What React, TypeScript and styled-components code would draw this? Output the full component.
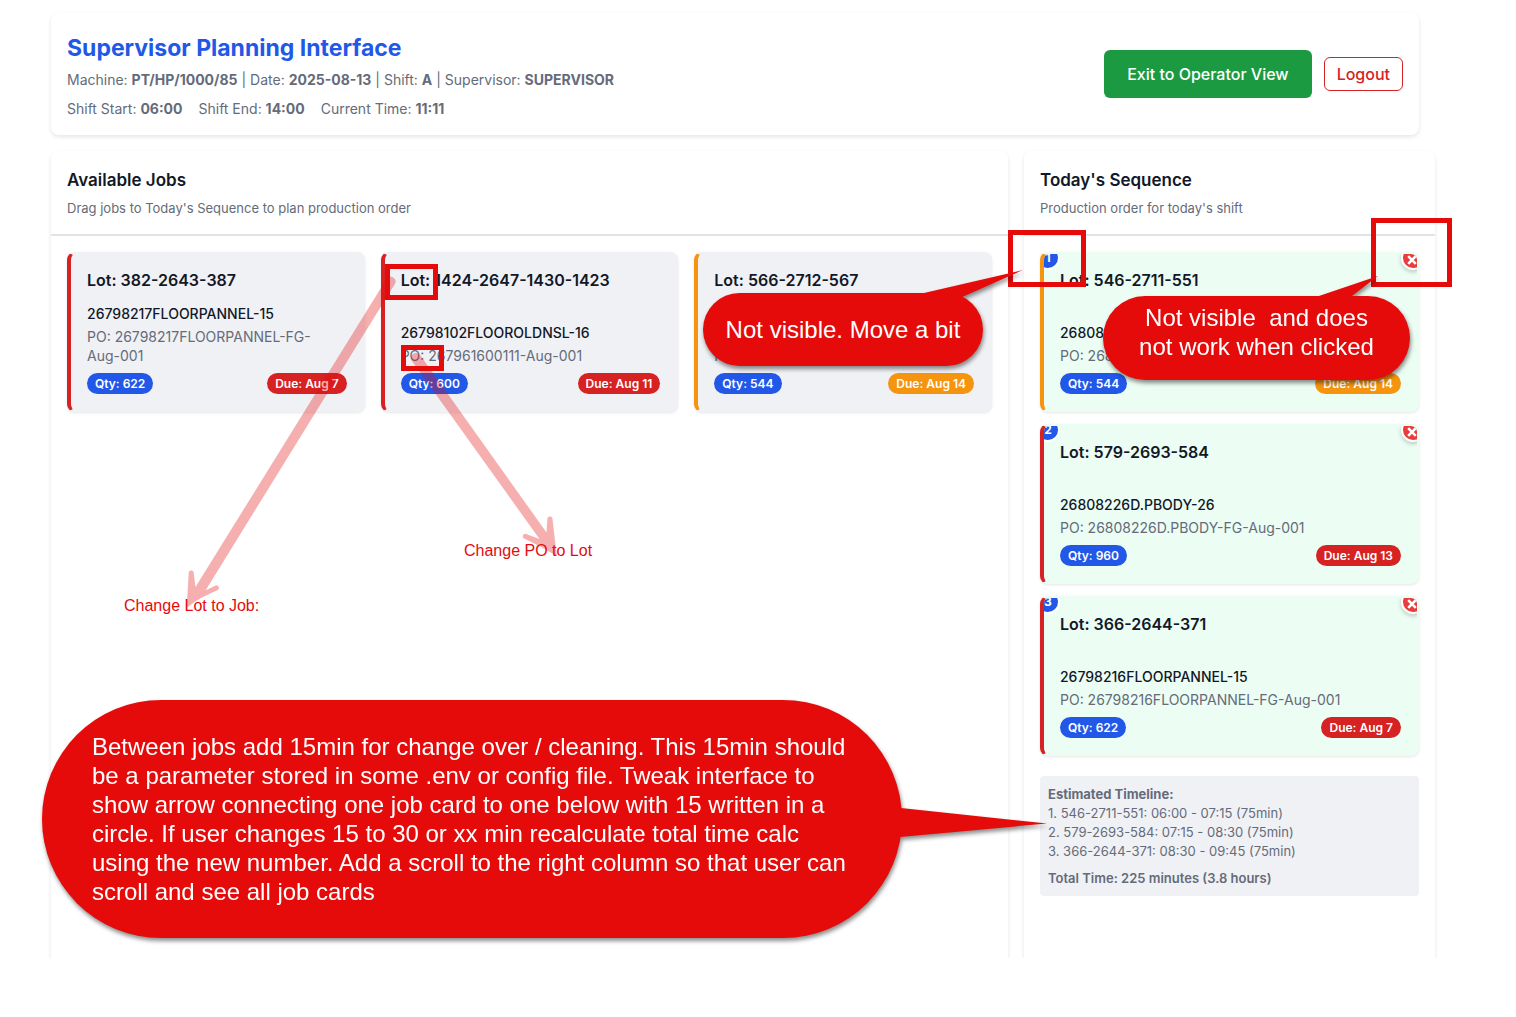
import React from 'react';
import styled, { createGlobalStyle } from 'styled-components';

const palette = {
  blue: '#2158e8',
  red: '#d62222',
  orange: '#f5940f',
  green: '#1b9a42',
  ink: '#111827',
  muted: '#646b7a',
  surface: '#f0f1f5',
  queued: '#ecfdf3',
  markup: '#e50b0b',
};

const GlobalStyle = createGlobalStyle`
  * { box-sizing: border-box; }
  body {
    margin: 0;
    background: #fff;
    color: ${palette.ink};
    font-family: Inter, "Liberation Sans", sans-serif;
    font-size: 13px;
  }
  h1, h2, h3, p, ol { margin: 0; padding: 0; }
  button { font-family: inherit; cursor: pointer; }
`;

const Canvas = styled.div`
  position: relative;
  min-height: 100vh;
  overflow: hidden;
`;

const Page = styled.main`
  display: flex;
  flex-direction: column;
  gap: 16px;
  height: calc(100vh - 59px);
  padding: 13px 81px 0 51px;
  overflow: hidden;
`;

const Header = styled.header`
  display: flex;
  flex-shrink: 0;
  align-items: center;
  justify-content: space-between;
  margin-right: 16px;
  padding: 16px;
  border-radius: 8px;
  background: #fff;
  box-shadow: 0 2px 4px rgba(0, 0, 0, 0.1);
`;

const Title = styled.h1`
  color: ${palette.blue};
  font-size: 23px;
  font-weight: 700;
  line-height: 38px;
`;

const Meta = styled.p`
  margin-top: 2px;
  color: ${palette.muted};
  font-size: 14px;
  line-height: 22px;
`;

const ShiftTimes = styled.div`
  display: flex;
  gap: 16px;
  margin-top: 8px;
  color: ${palette.muted};
  font-size: 14px;
  line-height: 20px;
`;

const Actions = styled.div`
  display: flex;
  align-items: center;
  gap: 12px;
`;

const ExitButton = styled.button`
  height: 48px;
  padding: 0 23px;
  border: 0;
  border-radius: 6px;
  background: ${palette.green};
  color: #fff;
  font-size: 16px;
  font-weight: 500;
`;

const LogoutButton = styled.button`
  height: 34px;
  padding: 0 12px;
  border: 1px solid ${palette.red};
  border-radius: 6px;
  background: #fff;
  color: ${palette.red};
  font-size: 16px;
  font-weight: 500;
`;

const Board = styled.div`
  display: grid;
  flex: 1;
  grid-template-columns: minmax(0, 7fr) minmax(411px, 3fr);
  gap: 16px;
  margin-bottom: -16px;
`;

const Panel = styled.section`
  border-radius: 8px;
  background: #fff;
  box-shadow: 0 2px 4px rgba(0, 0, 0, 0.1);
`;

const PanelHeader = styled.div`
  padding: 16px;
  border-bottom: 2px solid #e2e3e9;
`;

const PanelTitle = styled.h2`
  font-size: 17px;
  font-weight: 600;
  line-height: 27px;
`;

const PanelHint = styled.p`
  margin-top: 4px;
  color: ${palette.muted};
  font-size: 13px;
  line-height: 20px;
`;

const JobGrid = styled.div`
  display: grid;
  grid-template-columns: repeat(3, minmax(0, 1fr));
  gap: 16px;
  padding: 16px;
`;

const SequenceList = styled.div`
  display: flex;
  flex-direction: column;
  gap: 12px;
  padding: 16px;
`;

const Card = styled.article<{ $accent: string; $queued?: boolean }>`
  position: relative;
  display: flex;
  flex-direction: column;
  justify-content: space-between;
  min-height: 160px;
  padding: 16px;
  border: 2px solid transparent;
  border-left: 4px solid ${(p) => p.$accent};
  border-radius: 8px;
  background-color: ${(p) => (p.$queued ? palette.queued : palette.surface)};
  box-shadow: 0 1px 3px rgba(0, 0, 0, 0.1);
  overflow: hidden;
`;

const LotName = styled.h3`
  font-size: 16px;
  font-weight: 600;
  line-height: 20px;
`;

const Part = styled.p`
  font-size: 14px;
  font-weight: 500;
  line-height: 19px;
`;

const Order = styled.p`
  margin-top: 4px;
  color: ${palette.muted};
  font-size: 14px;
  line-height: 19px;
`;

const Batch = styled.span`
  white-space: nowrap;
`;

const Tags = styled.div`
  display: flex;
  justify-content: space-between;
  margin-top: 8px;
`;

const Tag = styled.span<{ $fill: string }>`
  padding: 0 8px;
  border-radius: 12px;
  background: ${(p) => p.$fill};
  color: #fff;
  font-size: 12px;
  font-weight: 600;
  line-height: 21px;
`;

const Position = styled.span`
  position: absolute;
  top: -8px;
  left: -8px;
  width: 24px;
  height: 24px;
  border: 2px solid #fff;
  border-radius: 50%;
  background: ${palette.blue};
  color: #fff;
  font-size: 12px;
  font-weight: 700;
  line-height: 20px;
  text-align: center;
`;

const RemoveButton = styled.button`
  position: absolute;
  top: -8px;
  right: -8px;
  display: flex;
  align-items: center;
  justify-content: center;
  width: 24px;
  height: 24px;
  padding: 4px 2px 0 0;
  border: 2px solid #fff;
  border-radius: 50%;
  background: #e93c3c;
  box-shadow: 0 2px 4px rgba(0, 0, 0, 0.2);
`;

const Timeline = styled.div`
  margin-top: 8px;
  padding: 8px;
  border-radius: 4px;
  background: ${palette.surface};
  color: ${palette.muted};
  font-size: 13px;
  line-height: 19px;
`;

const TimelineTitle = styled.h3`
  font-size: 13px;
  font-weight: 700;
  line-height: 20px;
`;

const TimelineSteps = styled.ol`
  list-style: none;
`;

const TimelineTotal = styled.p`
  margin-top: 8px;
  font-weight: 600;
`;

/* Review markup that lies over the page */

const Markup = styled.div`
  position: absolute;
  inset: 0;
  pointer-events: none;
  font-family: "Liberation Sans", Arial, sans-serif;
`;

const Drawing = styled.svg`
  position: absolute;
  top: 0;
  left: 0;
`;

type Box = { $x: number; $y: number; $w: number; $h: number };

const Frame = styled.div<Box>`
  position: absolute;
  left: ${(p) => p.$x}px;
  top: ${(p) => p.$y}px;
  width: ${(p) => p.$w}px;
  height: ${(p) => p.$h}px;
  border: 5px solid ${palette.markup};
`;

const Note = styled.span<{ $x: number; $y: number }>`
  position: absolute;
  left: ${(p) => p.$x}px;
  top: ${(p) => p.$y}px;
  color: ${palette.markup};
  font-size: 16px;
  line-height: 18px;
  white-space: nowrap;
`;

const CalloutGroup = styled.div`
  position: absolute;
  inset: 0;
  filter: drop-shadow(1px 3px 2px rgba(0, 0, 0, 0.45));
`;

const Bubble = styled.div<Box & { $align?: 'left'; $top?: boolean }>`
  position: absolute;
  left: ${(p) => p.$x}px;
  top: ${(p) => p.$y}px;
  display: flex;
  align-items: ${(p) => (p.$top ? 'flex-start' : 'center')};
  justify-content: ${(p) => (p.$align === 'left' ? 'flex-start' : 'center')};
  width: ${(p) => p.$w}px;
  height: ${(p) => p.$h}px;
  padding: ${(p) => (p.$top ? '7px' : '0')} ${(p) => (p.$align === 'left' ? '50px' : '0')};
  border-radius: 120px;
  background: ${palette.markup};
  color: #fff;
  font-size: 24px;
  line-height: 29px;
  text-align: ${(p) => p.$align || 'center'};
  white-space: pre;
`;

type Job = {
  lot: string;
  part: string;
  po: string;
  qty: number;
  due: string;
  tone: 'red' | 'orange';
};

const available: Job[] = [
  { lot: '382-2643-387', part: '26798217FLOORPANNEL-15', po: '26798217FLOORPANNEL-FG-', qty: 622, due: 'Aug 7', tone: 'red' },
  { lot: '1424-2647-1430-1423', part: '26798102FLOOROLDNSL-16', po: '267961600111-', qty: 600, due: 'Aug 11', tone: 'red' },
  { lot: '566-2712-567', part: '26808226D.PBODY', po: '26808226D-', qty: 544, due: 'Aug 14', tone: 'orange' },
];

const sequence: Job[] = [
  { lot: '546-2711-551', part: '26808226D.PBODY', po: '26808226D-', qty: 544, due: 'Aug 14', tone: 'orange' },
  { lot: '579-2693-584', part: '26808226D.PBODY-26', po: '26808226D.PBODY-FG-', qty: 960, due: 'Aug 13', tone: 'red' },
  { lot: '366-2644-371', part: '26798216FLOORPANNEL-15', po: '26798216FLOORPANNEL-FG-', qty: 622, due: 'Aug 7', tone: 'red' },
];

const steps = [
  '1. 546-2711-551: 06:00 - 07:15 (75min)',
  '2. 579-2693-584: 07:15 - 08:30 (75min)',
  '3. 366-2644-371: 08:30 - 09:45 (75min)',
];

const changeoverNote = [
  'Between jobs add 15min for change over / cleaning. This 15min should',
  'be a parameter stored in some .env or config file. Tweak interface to',
  'show arrow connecting one job card to one below with 15 written in a',
  'circle. If user changes 15 to 30 or xx min recalculate total time calc',
  'using the new number. Add a scroll to the right column so that user can',
  'scroll and see all job cards',
].join('\n');

function JobCard({ job, position }: { job: Job; position?: number }) {
  const accent = palette[job.tone];
  return (
    <Card $accent={accent} $queued={position !== undefined}>
      <LotName>Lot: {job.lot}</LotName>
      <div>
        <Part>{job.part}</Part>
        <Order>PO: {job.po}<Batch>Aug-001</Batch></Order>
        <Tags>
          <Tag $fill={palette.blue}>Qty: {job.qty}</Tag>
          <Tag $fill={accent}>Due: {job.due}</Tag>
        </Tags>
      </div>
      {position !== undefined && (
        <>
          <Position>{position}</Position>
          <RemoveButton type="button" aria-label={`Remove lot ${job.lot}`}>
            <svg width="10" height="10" viewBox="0 0 10 10" stroke="#fff" strokeWidth="2.6">
              <path d="M1.2 1.2 8.8 8.8M8.8 1.2 1.2 8.8" />
            </svg>
          </RemoveButton>
        </>
      )}
    </Card>
  );
}

export default function App() {
  return (
    <Canvas>
      <GlobalStyle />
      <Page>
        <Header>
          <div>
            <Title>Supervisor Planning Interface</Title>
            <Meta>
              Machine: <strong>PT/HP/1000/85</strong> | Date: <strong>2025-08-13</strong> | Shift:{' '}
              <strong>A</strong> | Supervisor: <strong>SUPERVISOR</strong>
            </Meta>
            <ShiftTimes>
              <span>Shift Start: <strong>06:00</strong></span>
              <span>Shift End: <strong>14:00</strong></span>
              <span>Current Time: <strong>11:11</strong></span>
            </ShiftTimes>
          </div>
          <Actions>
            <ExitButton type="button">Exit to Operator View</ExitButton>
            <LogoutButton type="button">Logout</LogoutButton>
          </Actions>
        </Header>
        <Board>
          <Panel>
            <PanelHeader>
              <PanelTitle>Available Jobs</PanelTitle>
              <PanelHint>Drag jobs to Today's Sequence to plan production order</PanelHint>
            </PanelHeader>
            <JobGrid>
              {available.map((job) => <JobCard key={job.lot} job={job} />)}
            </JobGrid>
          </Panel>
          <Panel>
            <PanelHeader>
              <PanelTitle>Today's Sequence</PanelTitle>
              <PanelHint>Production order for today's shift</PanelHint>
            </PanelHeader>
            <SequenceList>
              {sequence.map((job, i) => <JobCard key={job.lot} job={job} position={i + 1} />)}
              <Timeline>
                <TimelineTitle>Estimated Timeline:</TimelineTitle>
                <TimelineSteps>
                  {steps.map((s) => <li key={s}>{s}</li>)}
                </TimelineSteps>
                <TimelineTotal>Total Time: 225 minutes (3.8 hours)</TimelineTotal>
              </Timeline>
            </SequenceList>
          </Panel>
        </Board>
      </Page>

      <Markup>
        <Drawing width="700" height="700" fill={palette.markup} fillOpacity="0.33">
          <path d="M386.8 278.4A5 5 0 0 1 395.2 283.6L205.5 590.5L215 585.8A2.5 2.5 0 0 1 217.8 590L206 595.5Q196 600 186.7 608L188.7 573A2.5 2.5 0 0 1 193.7 573L195.5 587Z" />
          <path d="M411.9 360.9A5 5 0 0 1 420.1 355.1L546.5 532.5L547.4 519A2.5 2.5 0 0 1 552.5 519L556.8 556Q542 547 523.8 538.3A2.5 2.5 0 0 1 525.5 533.8L539.5 539Z" />
        </Drawing>
        <Frame $x={385} $y={264} $w={53} $h={36} />
        <Frame $x={401} $y={345} $w={43} $h={26} />
        <Frame $x={1008} $y={230} $w={78} $h={57} />
        <Frame $x={1371} $y={218} $w={81} $h={69} />
        <Note $x={464} $y={542}>Change PO to Lot</Note>
        <Note $x={124} $y={597}>Change Lot to Job:</Note>
        <CalloutGroup>
          <Drawing width="1500" height="960" fill={palette.markup}>
            <path d="M924 293L1023 270L960 298V310H924Z" />
            <path d="M1316 297L1378 276L1348 299V310H1316Z" />
            <path d="M890 807.5L901 808L1047 823.5L900 837H890Z" />
          </Drawing>
          <Bubble $x={703} $y={293} $w={280} $h={73}>Not visible. Move a bit</Bubble>
          <Bubble $x={1103} $y={296} $w={307} $h={84} $top>{'Not visible  and does\nnot work when clicked'}</Bubble>
          <Bubble $x={42} $y={700} $w={860} $h={238} $align="left">{changeoverNote}</Bubble>
        </CalloutGroup>
      </Markup>
    </Canvas>
  );
}
